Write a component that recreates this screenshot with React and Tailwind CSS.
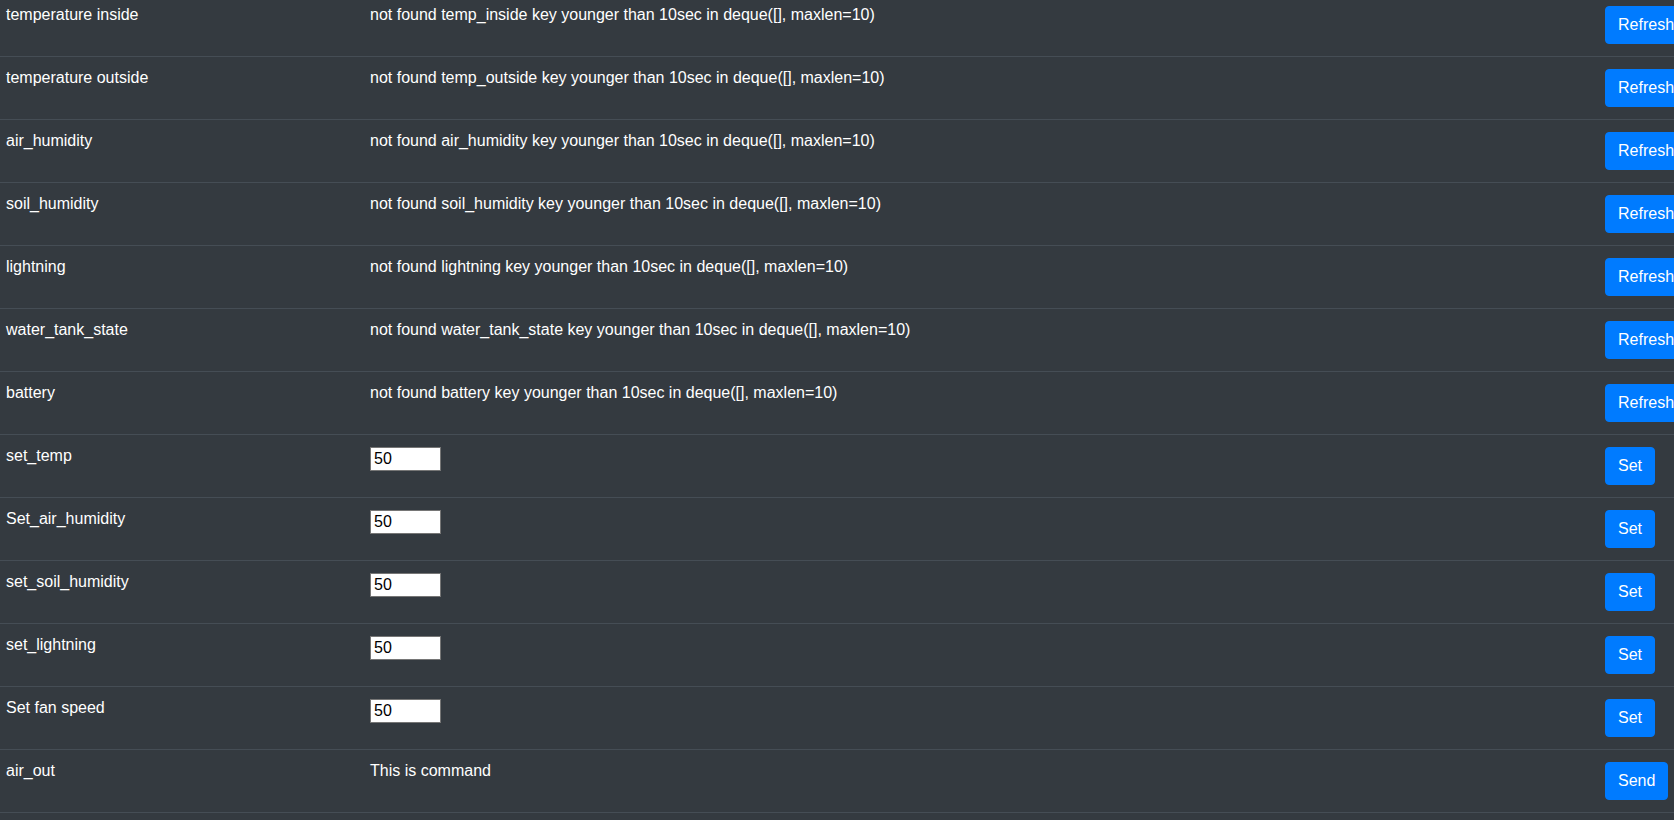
import React from "react";

const readRows = [
  ["temperature inside", "temp_inside"],
  ["temperature outside", "temp_outside"],
  ["air_humidity", "air_humidity"],
  ["soil_humidity", "soil_humidity"],
  ["lightning", "lightning"],
  ["water_tank_state", "water_tank_state"],
  ["battery", "battery"],
];

const setRows = ["set_temp", "Set_air_humidity", "set_soil_humidity", "set_lightning", "Set fan speed"];

function Btn({ children }) {
  return (
    <button className="whitespace-nowrap rounded-[4px] border border-[#007bff] bg-[#007bff] px-[12px] py-[6px] text-[16px] leading-[24px] text-white">
      {children}
    </button>
  );
}

function Row({ label, middle, action }) {
  return (
    <div className="flex h-[63px] border-t border-[#454d55]">
      <div className="w-[358px] shrink-0 pl-[6px] pt-[12px] leading-[18px]">{label}</div>
      <div className="w-[1235px] shrink-0 pl-[12px] pt-[12px] leading-[18px]">{middle}</div>
      <div className="shrink-0 pl-[12px] pt-[12px]">{action}</div>
    </div>
  );
}

export default function App() {
  return (
    <div
      className="h-screen w-screen overflow-hidden bg-[#343a40] text-[16px] text-white"
      style={{ fontFamily: '"Liberation Sans", Arial, sans-serif' }}
    >
      <div className="-mt-[7px] border-b border-[#454d55]">
        {readRows.map(([label, key]) => (
          <Row
            key={label}
            label={label}
            middle={`not found ${key} key younger than 10sec in deque([], maxlen=10)`}
            action={<Btn>Refresh</Btn>}
          />
        ))}
        {setRows.map((label) => (
          <Row
            key={label}
            label={label}
            middle={
              <input
                type="text"
                defaultValue="50"
                className="box-border block h-[24px] w-[71px] border border-[#767676] bg-white px-[3px] text-[16px] leading-[22px] text-black outline-none"
                style={{ fontFamily: '"Liberation Sans", Arial, sans-serif' }}
              />
            }
            action={<Btn>Set</Btn>}
          />
        ))}
        <Row label="air_out" middle="This is command" action={<Btn>Send</Btn>} />
      </div>
    </div>
  );
}
